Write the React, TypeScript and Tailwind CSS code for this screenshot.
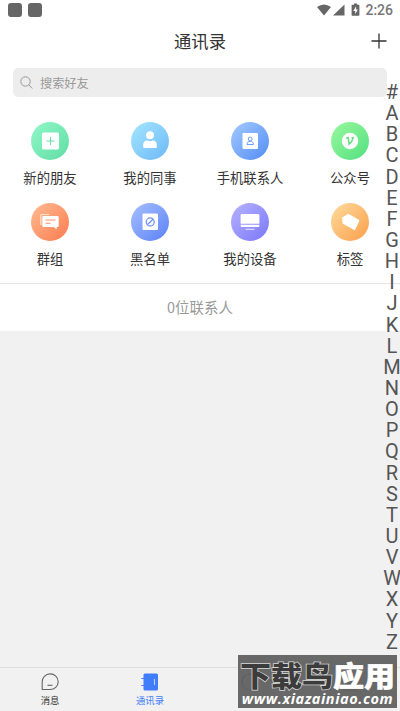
import type { ReactNode } from "react";

type Entry = {
  label: string;
  from: string;
  to: string;
  icon: ReactNode;
};

const ENTRIES: Entry[] = [
  {
    label: "新的朋友", from: "#8cf5c4", to: "#66dfa8",
    icon: (
      <>
        <rect x="11" y="10.5" width="17" height="17" rx="1.5" fill="#fff" />
        <path d="M19.5 15v8M15.5 19h8" stroke="#6be0ad" strokeWidth="1.1" />
      </>
    ),
  },
  {
    label: "我的同事", from: "#9fe2ff", to: "#72bdf7",
    icon: (
      <>
        <circle cx="19" cy="13.3" r="4" fill="#fff" />
        <path d="M12.2 25v-2.2c0-2.6 1.5-4.4 4-4.4 1.7 1 3.9 1 5.6 0 2.5 0 4 1.8 4 4.4V25a1 1 0 0 1-1 1H13.2a1 1 0 0 1-1-1z" fill="#fff" />
      </>
    ),
  },
  {
    label: "手机联系人", from: "#9bc4ff", to: "#5b93f6",
    icon: (
      <>
        <rect x="11.5" y="11" width="15.5" height="16" rx="1" fill="#fff" />
        <circle cx="19.2" cy="17" r="1.9" fill="none" stroke="#6a9ff8" />
        <path d="M16 22.500c0-2 1-3.100 3.200-3.100s3.200 1.100 3.200 3.100z" fill="none" stroke="#6a9ff8" />
      </>
    ),
  },
  {
    label: "公众号", from: "#92f69b", to: "#5ae283",
    icon: (
      <>
        <circle cx="19" cy="19" r="8.2" fill="#fff" />
        <path d="M15 16.400l2.200-.9.900 6.700c2.200-1.700 3.600-3.900 4.100-6.500l-1.600.4" fill="none" stroke="#66df83" strokeWidth="1.5" />
      </>
    ),
  },
  {
    label: "群组", from: "#ffb58a", to: "#fb8257",
    icon: (
      <>
        <path d="M9.800 22V12.500a1 1 0 0 1 1-1h7.500" fill="none" stroke="#ffe3d5" strokeWidth="1.2" />
        <path d="M12.500 13h14a1.200 1.200 0 0 1 1.200 1.200v8.600a1.200 1.200 0 0 1-1.200 1.200h-.8v2.300L22.500 24h-10a1.200 1.200 0 0 1-1.200-1.200v-8.600a1.200 1.200 0 0 1 1.200-1.200z" fill="#fff" />
        <path d="M14.500 17h10M14.500 20.200h5" stroke="#fb9068" strokeWidth="1.1" />
      </>
    ),
  },
  {
    label: "黑名单", from: "#9fbaff", to: "#6387f7",
    icon: (
      <>
        <rect x="11.5" y="10.5" width="15.5" height="16.5" rx="1" fill="#fff" />
        <circle cx="19.2" cy="18.9" r="4" fill="none" stroke="#6b8ff8" strokeWidth="1.2" />
        <path d="M16.500 21.500l5.500-5.200" stroke="#6b8ff8" strokeWidth="1.2" />
      </>
    ),
  },
  {
    label: "我的设备", from: "#b1adff", to: "#807dfa",
    icon: (
      <>
        <path d="M10.800 11h16.400a1.200 1.200 0 0 1 1.200 1.200v8.500H9.600v-8.500a1.200 1.200 0 0 1 1.200-1.200z" fill="#fff" />
        <path d="M9.600 21.800h18.800v1a1.200 1.200 0 0 1-1.200 1.200H10.800a1.200 1.200 0 0 1-1.200-1.200z" fill="#fff" />
        <path d="M14.500 26.300h9" stroke="#dddcff" strokeWidth="1.2" />
      </>
    ),
  },
  {
    label: "标签", from: "#ffd596", to: "#f9a552",
    icon: <path d="M11.800 14.800l5.700-3.300 10.300 6-4.300 9-11.200-6.300z" fill="#fff" stroke="#fff" strokeWidth="1.4" strokeLinejoin="round" />,
  },
];

const LETTERS = "#ABCDEFGHIJKLMNOPQRSTUVWXYZ".split("");

function StatusBar() {
  return (
    <div className="flex h-5 items-center pl-[7.5px] pr-[7px] text-[#666]">
      <span className="size-[14.5px] rounded-[3px] bg-[#666]" />
      <span className="ml-[5.5px] size-[14.5px] rounded-[3px] bg-[#666]" />
      <svg className="ml-auto" width="46" height="14" viewBox="0 0 46 14" fill="currentColor">
        <path d="M1 4Q8-1.200 15 4L8 12.500z" />
        <path d="M28.500 1.500v11H17z" />
        <path d="M36.300 1.800h1.700V.6h3.200v1.200h1.500a.7.700 0 0 1 .7.700v9.600a.7.700 0 0 1-.7.700h-6.400a.7.700 0 0 1-.7-.7V2.500a.7.700 0 0 1 .7-.7z" />
        <path d="M40.100 3.300L37.300 7.900h1.900v3.300l2.600-4.600h-1.700z" fill="#fff" />
      </svg>
      <span className="ml-[3px] font-[Roboto] text-[14px] font-medium leading-5 text-[#777]">2:26</span>
    </div>
  );
}

function EntryItem({ entry, id }: { entry: Entry; id: string }) {
  return (
    <div className="flex h-[81px] flex-col items-center">
      <svg width="38" height="38" viewBox="0 0 38 38">
        <defs>
          <linearGradient id={id} x1="0.1" y1="0.1" x2="0.9" y2="0.9">
            <stop offset="0" stopColor={entry.from} />
            <stop offset="1" stopColor={entry.to} />
          </linearGradient>
        </defs>
        <circle cx="19" cy="19" r="19" fill={`url(#${id})`} />
        {entry.icon}
      </svg>
      <span className="mt-2 text-[13.33px] leading-5 text-[#333]">{entry.label}</span>
    </div>
  );
}

function TabBar() {
  return (
    <nav className="grid h-11 grid-cols-4 border-t border-[#dedede] bg-[#f1f1f1] text-[9.33px] leading-3 text-[#333]">
      <div className="flex flex-col items-center pt-[5px]">
        <svg width="18" height="18" viewBox="0 0 18 18" fill="none" stroke="#666" strokeWidth="1.1">
          <path d="M1.200 16.500V9A8 7.800 0 1 1 9 16.500z" strokeLinejoin="round" />
          <path d="M6.500 12.300h5" />
        </svg>
        <span className="mt-[3px]">消息</span>
      </div>
      <div className="flex flex-col items-center pt-[5px] text-[#3f7dfa]">
        <svg width="18" height="18" viewBox="0 0 18 18">
          <rect x="2.5" y="0.5" width="14.5" height="17" rx="1.5" fill="#3f7dfa" />
          <path d="M.3 5.500h3.500M.3 12.500h3.500" stroke="#3f7dfa" strokeWidth="1.2" />
          <path d="M13.500 6v6" stroke="#b9d0ff" strokeWidth="1.1" />
        </svg>
        <span className="mt-[3px]">通讯录</span>
      </div>
      <div className="flex flex-col items-center pt-[5px]">
        <svg width="18" height="18" viewBox="0 0 18 18" fill="none" stroke="#666" strokeWidth="1.1">
          <circle cx="9" cy="9" r="8" />
        </svg>
      </div>
      <div className="flex flex-col items-center pt-[5px]">
        <svg width="18" height="18" viewBox="0 0 18 18" fill="none" stroke="#666" strokeWidth="1.1">
          <circle cx="9" cy="5" r="4" />
          <path d="M2 17c0-8 14-8 14 0z" />
        </svg>
      </div>
    </nav>
  );
}

function Watermark() {
  return (
    <div className="absolute bottom-[3px] right-[3px] flex h-[53px] w-[159px] flex-col items-center bg-[#5e5e5e]/93 text-white">
      <div className="flex h-[37px] scale-y-90 items-center whitespace-nowrap pt-1 text-[31px] font-black leading-[37px]">
        <span className="text-[#3c3c3c] [paint-order:stroke_fill] [-webkit-text-stroke:1.6px_#d8d8d8]">下载鸟</span>
        <span className="[-webkit-text-stroke:0.6px_#fff]">应用</span>
      </div>
      <div className="-mt-[1.5px] whitespace-nowrap font-['Open_Sans'] text-[14.5px] font-bold italic leading-4 tracking-[0.55px]">www.xiazainiao.com</div>
    </div>
  );
}

export default function App() {
  return (
    <div className="relative flex h-[711px] w-[400px] flex-col overflow-hidden bg-[#f1f1f1] font-['Noto_Sans_CJK_SC',sans-serif]">
      <div className="h-[331px] bg-white">
        <StatusBar />
        <header className="grid h-[42px] grid-cols-3 items-center">
          <h1 className="col-start-2 text-center text-[17.3px] leading-6 text-[#333]">通讯录</h1>
          <svg className="mr-[13px] justify-self-end" width="16" height="16" viewBox="0 0 16 16" stroke="#333" strokeWidth="1.3">
            <path d="M8 .5v15M.5 8h15" />
          </svg>
        </header>
        <div className="mx-[13px] mt-[6px] flex h-[29px] items-center rounded-[5px] bg-[#ededed] pl-[7px] text-[12.2px] text-[#999]">
          <svg width="13" height="13" viewBox="0 0 13 13" fill="none" stroke="#999">
            <circle cx="5.5" cy="5.5" r="4.7" />
            <path d="M9 9l3.300 3.500" />
          </svg>
          <span className="ml-[7px] pt-px">搜索好友</span>
        </div>
        <div className="mt-[24.5px] grid h-[162.5px] grid-cols-4 content-start border-b border-[#e5e5e5]">
          {ENTRIES.map((e, i) => <EntryItem key={e.label} entry={e} id={`g${i}`} />)}
        </div>
        <div className="flex h-[46px] items-center justify-center text-[14.5px] text-[#999]">0位联系人</div>
      </div>

      <div className="flex-1" />
      <TabBar />

      {/* alphabet index floats above the list */}
      <div className="absolute right-0 top-[82px] flex w-4 flex-col items-center font-[Roboto] text-[20px] leading-[21.14px] text-[#555]">
        {LETTERS.map((l) => <span key={l}>{l}</span>)}
      </div>
      <Watermark />
    </div>
  );
}
